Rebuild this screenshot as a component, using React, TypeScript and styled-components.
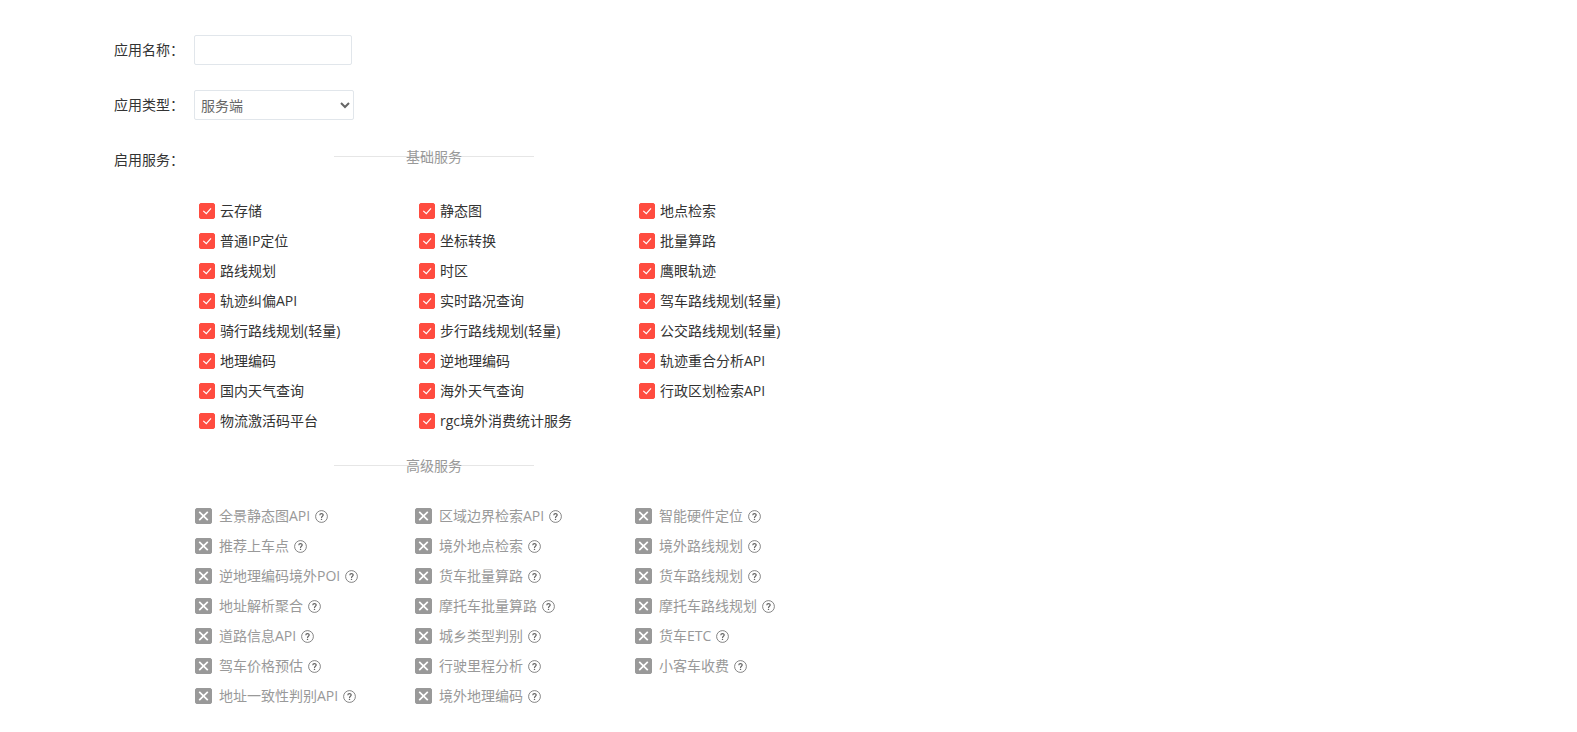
import React, { useId } from 'react';
import styled, { createGlobalStyle } from 'styled-components';

const GlobalStyle = createGlobalStyle`
  * { box-sizing: border-box; }
  body {
    margin: 0;
    background: #fff;
    color: #333;
    font: 14px/30px "Open Sans", "Noto Sans CJK SC", sans-serif;
  }
  input, select, button { font: inherit; margin: 0; }
`;

const Form = styled.form`
  display: flex;
  flex-direction: column;
  gap: 25px;
  padding: 35px 24px 20px 114px;
`;

const Row = styled.div`
  display: grid;
  grid-template-columns: 70px minmax(0, 1fr);
  column-gap: 10px;
  align-items: start;
`;

const RowLabel = styled.label`
  white-space: nowrap;
`;

const TextInput = styled.input`
  width: 158px;
  height: 30px;
  padding: 0 6px;
  border: 1px solid #e1e6eb;
  border-radius: 2px;
  color: #666;
  outline: none;
`;

const Select = styled.select`
  width: 160px;
  height: 30px;
  padding: 0 2px;
  border: 1px solid #e1e6eb;
  border-radius: 2px;
  background: #fff;
  color: #666;
`;

const Services = styled.div`
  max-width: 660px;
`;

const Title = styled.h2`
  display: grid;
  place-items: center;
  width: 200px;
  margin: 0 0 23px 140px;
  font-size: 14px;
  font-weight: 400;
  line-height: 24px;
  color: #999;

  &::before {
    content: '';
    grid-area: 1 / 1;
    width: 100%;
    height: 1px;
    margin-bottom: 2px;
    background: #e6e6e6;
  }
`;

const TitleText = styled.span`
  grid-area: 1 / 1;
`;

const List = styled.ul<{ $locked?: boolean }>`
  display: grid;
  grid-template-columns: repeat(3, 1fr);
  margin: 0;
  padding: ${(p) => (p.$locked ? '0' : '4px 0 18px')};
  list-style: none;
`;

const Item = styled.li<{ $locked?: boolean }>`
  display: flex;
  align-items: center;
  height: 30px;
  padding-left: ${(p) => (p.$locked ? 1 : 5)}px;
  color: ${(p) => (p.$locked ? '#999' : '#333')};
  white-space: nowrap;
`;

const ItemLabel = styled.label<{ $locked?: boolean }>`
  display: flex;
  align-items: center;
  gap: ${(p) => (p.$locked ? 7 : 5)}px;
`;

const Box = styled.span<{ $locked?: boolean }>`
  display: grid;
  width: ${(p) => (p.$locked ? 17 : 16)}px;
  height: 16px;

  > * { grid-area: 1 / 1; }
  > svg { pointer-events: none; }
`;

const Check = styled.input`
  appearance: none;
  width: 100%;
  height: 16px;
  border: 1px solid #ccc;
  border-radius: 2px;
  background: #fff;

  &:checked { border-color: #ff4c40; background: #ff4c40; }
  &:disabled { border-color: #999; background: #999; }
`;

const Help = styled.button`
  display: flex;
  margin-left: 5px;
  padding: 0;
  border: 0;
  background: none;
  color: #666;
`;

const basic = [
  '云存储', '静态图', '地点检索',
  '普通IP定位', '坐标转换', '批量算路',
  '路线规划', '时区', '鹰眼轨迹',
  '轨迹纠偏API', '实时路况查询', '驾车路线规划(轻量)',
  '骑行路线规划(轻量)', '步行路线规划(轻量)', '公交路线规划(轻量)',
  '地理编码', '逆地理编码', '轨迹重合分析API',
  '国内天气查询', '海外天气查询', '行政区划检索API',
  '物流激活码平台', 'rgc境外消费统计服务',
];

const advanced = [
  '全景静态图API', '区域边界检索API', '智能硬件定位',
  '推荐上车点', '境外地点检索', '境外路线规划',
  '逆地理编码境外POI', '货车批量算路', '货车路线规划',
  '地址解析聚合', '摩托车批量算路', '摩托车路线规划',
  '道路信息API', '城乡类型判别', '货车ETC',
  '驾车价格预估', '行驶里程分析', '小客车收费',
  '地址一致性判别API', '境外地理编码',
];

const TickIcon = () => (
  <svg width="16" height="16" viewBox="0 0 16 16" fill="none" stroke="#fff" strokeWidth="1.15" aria-hidden="true">
    <path d="M4.3 7.8 7.3 10.6 12 5.4" />
  </svg>
);

const CrossIcon = () => (
  <svg width="17" height="16" viewBox="0 0 17 16" fill="none" stroke="#fff" strokeWidth="1.7" aria-hidden="true">
    <path d="M4.2 3.8 12.8 12.2M12.8 3.8 4.2 12.2" />
  </svg>
);

const HelpIcon = () => (
  <svg width="13" height="13" viewBox="0 0 13 13" fill="none" stroke="currentColor" aria-hidden="true">
    <circle cx="6.5" cy="6.5" r="5.9" strokeWidth="0.8" />
    <path d="M4.8 5.2C4.8 3 8.2 3 8.2 5.1 8.2 6.3 6.5 6.4 6.5 7.9" strokeWidth="1.2" />
    <path d="M6.5 8.8V10" strokeWidth="1.3" />
  </svg>
);

function Service({ name, locked }: { name: string; locked?: boolean }) {
  const id = useId();
  return (
    <Item $locked={locked}>
      <ItemLabel htmlFor={id} $locked={locked}>
        <Box $locked={locked}>
          <Check id={id} type="checkbox" defaultChecked={!locked} disabled={locked} />
          {locked ? <CrossIcon /> : <TickIcon />}
        </Box>
        {name}
      </ItemLabel>
      {locked && (
        <Help type="button" aria-label={name}>
          <HelpIcon />
        </Help>
      )}
    </Item>
  );
}

export default function App() {
  return (
    <>
      <GlobalStyle />
      <Form>
        <Row>
          <RowLabel htmlFor="app-name">应用名称：</RowLabel>
          <TextInput id="app-name" type="text" />
        </Row>
        <Row>
          <RowLabel htmlFor="app-type">应用类型：</RowLabel>
          <Select id="app-type" defaultValue="server">
            <option value="server">服务端</option>
          </Select>
        </Row>
        <Row>
          <RowLabel as="span" id="services-label">启用服务：</RowLabel>
          <Services role="group" aria-labelledby="services-label">
            <Title><TitleText>基础服务</TitleText></Title>
            <List>
              {basic.map((name) => <Service key={name} name={name} />)}
            </List>
            <Title><TitleText>高级服务</TitleText></Title>
            <List $locked>
              {advanced.map((name) => <Service key={name} name={name} locked />)}
            </List>
          </Services>
        </Row>
      </Form>
    </>
  );
}
